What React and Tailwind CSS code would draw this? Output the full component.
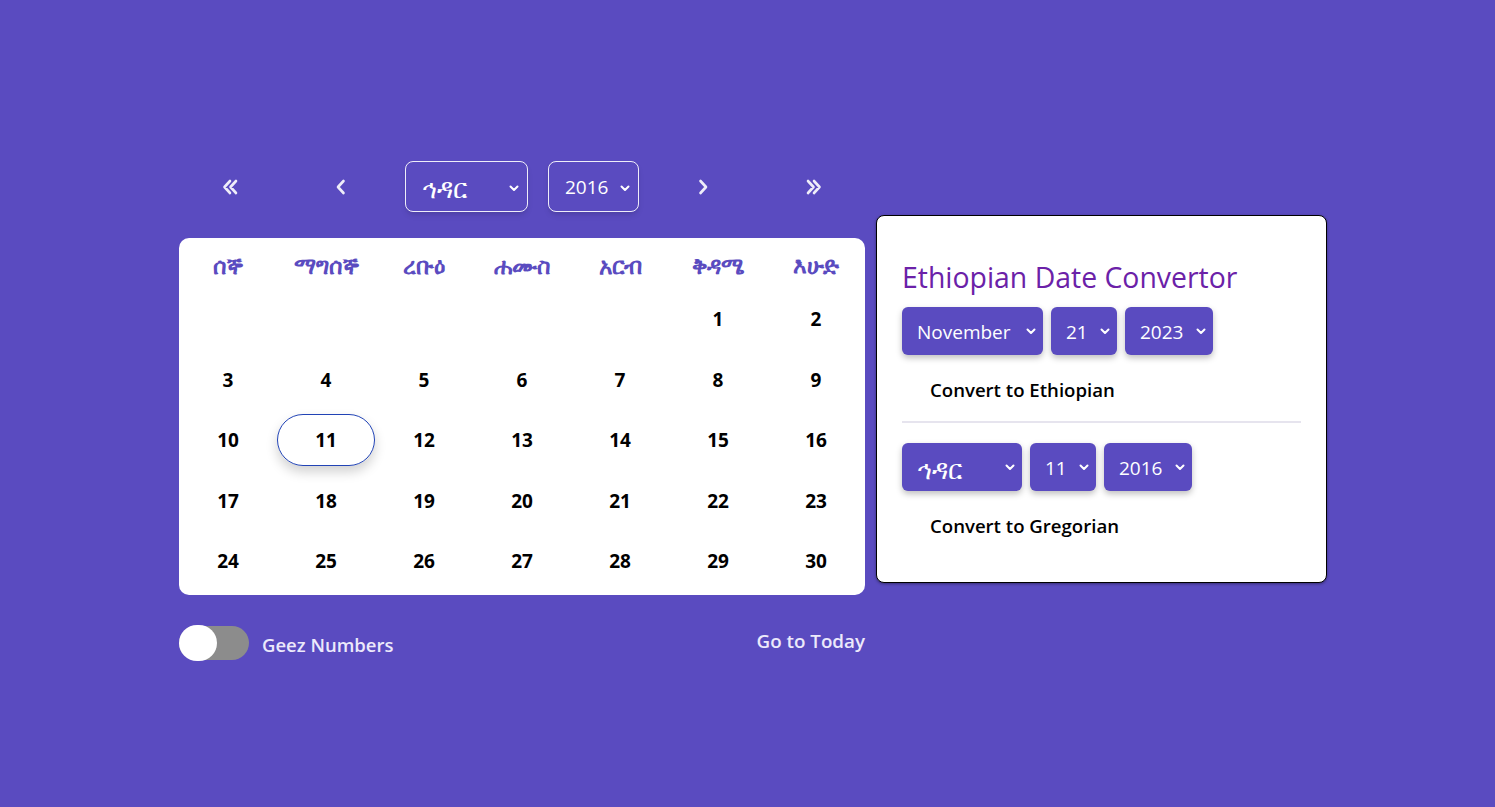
import React from 'react';

const FONT = { fontFamily: '"Open Sans", "Noto Sans", "DejaVu Sans", sans-serif' };

const dayNames = ['ሰኞ', 'ማግሰኞ', 'ረቡዕ', 'ሐሙስ', 'አርብ', 'ቅዳሜ', 'እሁድ'];

function Chevron({ className }) {
  return (
    <svg viewBox="0 0 12 12" className={className} fill="none" stroke="currentColor" strokeWidth="2" strokeLinecap="round" strokeLinejoin="round">
      <path d="M2.5 4.5 6 8l3.5-3.5" />
    </svg>
  );
}

function NavSelect({ value, width, amharic }) {
  return (
    <div className={`relative h-[51px] ${width} rounded-lg border border-white/90 shadow-md flex items-center pl-4 pt-[2px] text-white text-[19px]`}>
      <span className={amharic ? 'text-[26px] leading-none' : ''}>{value}</span>
      <Chevron className="absolute right-[7px] top-[20px] w-3 h-3" />
    </div>
  );
}

function PurpleSelect({ value, width, amharic }) {
  return (
    <div className={`relative h-12 ${width} rounded-md bg-[#5a4bc0] shadow-[0_3px_6px_rgba(0,0,0,0.25)] flex items-center pl-[15px] pt-[3px] text-white text-[19px]`}>
      <span className={amharic ? 'text-[26px] leading-none' : ''}>{value}</span>
      <Chevron className="absolute right-[6px] top-[18px] w-3 h-3" />
    </div>
  );
}

function DoubleLeft() {
  return (
    <svg viewBox="0 0 20 20" className="w-5 h-5" fill="none" stroke="currentColor" strokeWidth="2.6" strokeLinecap="round" strokeLinejoin="round">
      <path d="M10 4 4.5 10 10 16M16 4l-5.5 6 5.5 6" />
    </svg>
  );
}
function DoubleRight() {
  return (
    <svg viewBox="0 0 20 20" className="w-5 h-5" fill="none" stroke="currentColor" strokeWidth="2.6" strokeLinecap="round" strokeLinejoin="round">
      <path d="M4 4l5.5 6L4 16M10 4l5.5 6-5.5 6" />
    </svg>
  );
}
function Left() {
  return (
    <svg viewBox="0 0 20 20" className="w-5 h-5" fill="none" stroke="currentColor" strokeWidth="2.6" strokeLinecap="round" strokeLinejoin="round">
      <path d="M12.5 4 7 10l5.5 6" />
    </svg>
  );
}
function Right() {
  return (
    <svg viewBox="0 0 20 20" className="w-5 h-5" fill="none" stroke="currentColor" strokeWidth="2.6" strokeLinecap="round" strokeLinejoin="round">
      <path d="M7.5 4 13 10l-5.5 6" />
    </svg>
  );
}

export default function App() {
  const cells = [null, null, null, null, null];
  for (let d = 1; d <= 30; d++) cells.push(d);

  return (
    <div className="w-full h-[807px] bg-[#5a4bc0] flex pl-[179px] pt-[161px]" style={FONT}>
      {/* Calendar column */}
      <div className="w-[686px] flex flex-col">
        <div className="flex items-center h-[51px] text-white/90">
          <button className="w-10 ml-[31px] flex justify-center"><DoubleLeft /></button>
          <button className="w-10 ml-[71px] flex justify-center"><Left /></button>
          <div className="ml-[44px]"><NavSelect value="ኅዳር" width="w-[123px]" amharic /></div>
          <div className="ml-[20px]"><NavSelect value="2016" width="w-[91px]" /></div>
          <button className="w-10 ml-[44px] flex justify-center"><Right /></button>
          <button className="w-10 ml-[71px] flex justify-center"><DoubleRight /></button>
        </div>

        <div className="mt-[26px] bg-white rounded-[10px] h-[357px] pt-[11px]">
          <div className="grid grid-cols-7">
            {dayNames.map((n) => (
              <div key={n} className="h-[32px] flex items-center justify-center font-bold text-[23px] leading-none text-[#5a4bc0]">{n}</div>
            ))}
          </div>
          <div className="grid grid-cols-7 mt-[8px]">
            {cells.map((d, i) => (
              <div key={i} className="h-[60.6px] flex items-center justify-center">
                {d === 11 ? (
                  <div className="w-[98px] h-[52px] rounded-full border border-[#2143b5] shadow-[0_6px_12px_rgba(0,0,0,0.18)] flex items-center justify-center font-bold text-[19px] text-black">11</div>
                ) : (
                  d && <span className="font-bold text-[19px] text-black">{d}</span>
                )}
              </div>
            ))}
          </div>
        </div>

        <div className="mt-[31px] flex items-center justify-between">
          <div className="flex items-center">
            <div className="relative w-[70px] h-[34px] rounded-full bg-[#8c8c8c]">
              <div className="absolute left-0 top-[-1px] w-[38px] h-[36px] rounded-full bg-white" />
            </div>
            <span className="ml-[13px] mt-[4px] text-[18.5px] font-semibold text-[#ece9fb]">Geez Numbers</span>
          </div>
          <span className="text-[18.8px] font-semibold text-[#ece9fb] -mt-[4px]">Go to Today</span>
        </div>
      </div>

      {/* Converter card */}
      <div className="ml-[11px] mt-[54px] w-[451px] h-[368px] bg-white border border-black rounded-[8px] shadow-[0_1px_3px_rgba(0,0,0,0.4)] px-[25px] pt-[40px]">
        <h1 className="text-[28.4px] leading-[40px] text-[#6b21a8] mt-[1px]">Ethiopian Date Convertor</h1>
        <div className="mt-[10px] flex gap-2">
          <PurpleSelect value="November" width="w-[141px]" />
          <PurpleSelect value="21" width="w-[66px]" />
          <PurpleSelect value="2023" width="w-[88px]" />
        </div>
        <button className="mt-[6px] ml-[4px] h-[54px] pt-[4px] px-6 rounded-xl bg-white font-semibold text-[18.6px] text-black">Convert to Ethiopian</button>
        <div className="mt-[6px] h-[2px] bg-[#e6e4ee]" />
        <div className="mt-[20px] flex gap-2">
          <PurpleSelect value="ኅዳር" width="w-[120px]" amharic />
          <PurpleSelect value="11" width="w-[66px]" />
          <PurpleSelect value="2016" width="w-[88px]" />
        </div>
        <button className="mt-[6px] ml-[4px] h-[54px] pt-[4px] px-6 rounded-xl bg-white font-semibold text-[18.6px] text-black">Convert to Gregorian</button>
      </div>
    </div>
  );
}
